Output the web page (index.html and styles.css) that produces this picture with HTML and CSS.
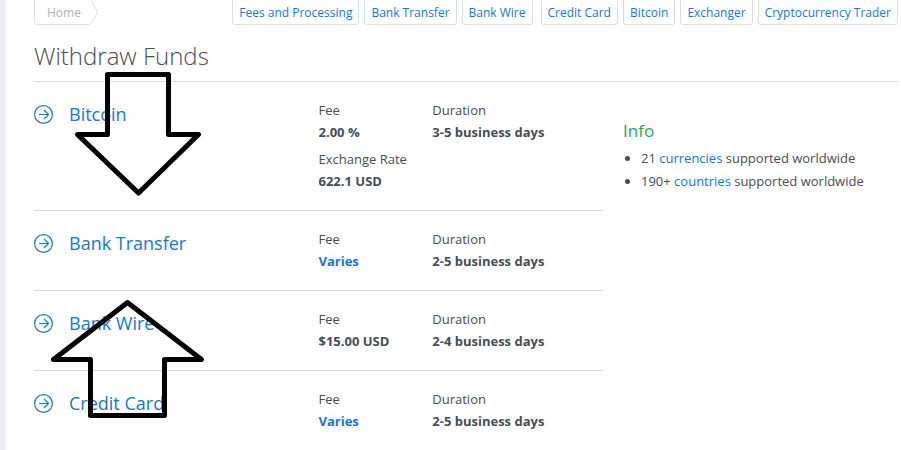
FILE: index.html
```html
<!DOCTYPE html>
<html lang="en">
<head>
<meta charset="utf-8">
<title>Withdraw Funds</title>
<link rel="stylesheet" href="styles.css">
</head>
<body>
<svg class="symbols" aria-hidden="true">
  <symbol id="go" viewBox="0 0 20 20">
    <g fill="none" stroke="currentColor" stroke-width="1.200">
      <circle cx="9.500" cy="9.500" r="8.900"/>
      <path d="M5 9.500H14.500M10 5L14.500 9.500L10 14"/>
    </g>
  </symbol>
</svg>
<div class="page">
  <header class="topbar">
    <a class="crumb" href="#">
      <svg class="crumb-shape" viewBox="0 0 65 29" aria-hidden="true"><path d="M57 .5H3.500Q.5 .5 .5 3.500V25.500Q.5 28.500 3.500 28.500H55.500Q57 28.500 58 27L63.500 16.500L57.500 5"/></svg>
      <span class="crumb-text">Home</span>
    </a>
    <nav class="tabs">
      <div class="tab-group">
        <a class="tab" href="#">Fees and Processing</a>
        <a class="tab" href="#">Bank Transfer</a>
        <a class="tab" href="#">Bank Wire</a>
      </div>
      <div class="tab-group">
        <a class="tab" href="#">Credit Card</a>
        <a class="tab" href="#">Bitcoin</a>
        <a class="tab" href="#">Exchanger</a>
        <a class="tab" href="#">Cryptocurrency Trader</a>
      </div>
    </nav>
  </header>
  <h1 class="title">Withdraw Funds</h1>
  <div class="content">
    <main class="methods">
      <section class="method">
        <h2 class="name"><a href="#"><svg class="go"><use href="#go"/></svg>Bitcoin</a></h2>
        <dl class="facts"><dt>Fee</dt><dd>2.00 %</dd><dt>Exchange Rate</dt><dd>622.1 USD</dd></dl>
        <dl class="facts"><dt>Duration</dt><dd>3-5 business days</dd></dl>
      </section>
      <section class="method">
        <h2 class="name"><a href="#"><svg class="go"><use href="#go"/></svg>Bank Transfer</a></h2>
        <dl class="facts"><dt>Fee</dt><dd><a href="#">Varies</a></dd></dl>
        <dl class="facts"><dt>Duration</dt><dd>2-5 business days</dd></dl>
      </section>
      <section class="method">
        <h2 class="name"><a href="#"><svg class="go"><use href="#go"/></svg>Bank Wire</a></h2>
        <dl class="facts"><dt>Fee</dt><dd>$15.00 USD</dd></dl>
        <dl class="facts"><dt>Duration</dt><dd>2-4 business days</dd></dl>
      </section>
      <section class="method">
        <h2 class="name"><a href="#"><svg class="go"><use href="#go"/></svg>Credit Card</a></h2>
        <dl class="facts"><dt>Fee</dt><dd><a href="#">Varies</a></dd></dl>
        <dl class="facts"><dt>Duration</dt><dd>2-5 business days</dd></dl>
      </section>
    </main>
    <aside class="info">
      <h2 class="info-title">Info</h2>
      <ul class="info-list">
        <li>21 <a href="#">currencies</a> supported worldwide</li>
        <li>190+ <a href="#">countries</a> supported worldwide</li>
      </ul>
    </aside>
  </div>
</div>
<svg class="arrows" width="220" height="430" viewBox="0 0 220 430" aria-hidden="true">
  <path d="M107.500 74.500H168.500V134.500H198.500L138.500 193L77.500 134.500H107.500Z"/>
  <path d="M127.500 302.500L201.500 359.500H164.500V415.500H90.500V359.500H53.500Z"/>
</svg>
</body>
</html>
```
FILE: styles.css
```css
* { box-sizing: border-box; }

body {
  margin: 0;
  background: #fff;
  color: #454d56;
  font: 13px/22px "Open Sans", "Noto Sans", sans-serif;
}

a { color: #0f77e2; text-decoration: none; }

.symbols { display: none; }

.page {
  min-height: 100vh;
  padding: 0 3px 0 28px;
  border-left: 6px solid #eaeef2;
  overflow: hidden;
}

.topbar {
  display: flex;
  justify-content: space-between;
  margin-top: -4px;
}

.crumb {
  display: grid;
  color: #b0b2b4;
  font-size: 12px;
}
.crumb-shape, .crumb-text { grid-area: 1 / 1; }
.crumb-shape { width: 65px; height: 29px; fill: none; stroke: #dcdfe1; }
.crumb-text { padding: 2px 0 0 13px; line-height: 29px; height: 29px; }

.tabs { display: flex; gap: 8px; }
.tab-group { display: flex; gap: 5px; }
.tab {
  height: 29px;
  padding: 2px 6px 0;
  border: 1px solid #dadddf;
  border-radius: 3px;
  font-size: 12px;
  line-height: 28px;
  white-space: nowrap;
}

.title {
  margin: 0;
  padding: 13px 0 8px;
  border-bottom: 1px solid #d8dcde;
  font-size: 24px;
  font-weight: 300;
  line-height: 35px;
}

.content {
  display: grid;
  grid-template-columns: 569fr 275fr;
  gap: 20px;
}

.method {
  display: grid;
  grid-template-columns: 50% 20% 30%;
  padding: 17px 0 13px;
  border-bottom: 1px solid #d8d8d8;
}
.method:last-child { border-bottom: 0; }

.name { margin: 0; font-size: 18px; font-weight: 400; line-height: 30px; }
.name a { display: flex; align-items: center; gap: 15px; }
.go { width: 20px; height: 20px; margin-top: 2px; }

.facts { margin: 0; }
.facts dt { font-weight: 400; }
.facts dd { margin: 0 0 5px; font-weight: 700; }

.info { padding-top: 36px; }
.info-title {
  margin: 0 0 3px;
  color: #1cab50;
  font-size: 17px;
  font-weight: 400;
  line-height: 26px;
}
.info-list { margin: 0; padding-left: 18px; line-height: 23px; }

.arrows {
  position: absolute;
  top: 0;
  left: 0;
  fill: none;
  stroke: #000;
  stroke-width: 5;
  stroke-linejoin: round;
  pointer-events: none;
}
```
